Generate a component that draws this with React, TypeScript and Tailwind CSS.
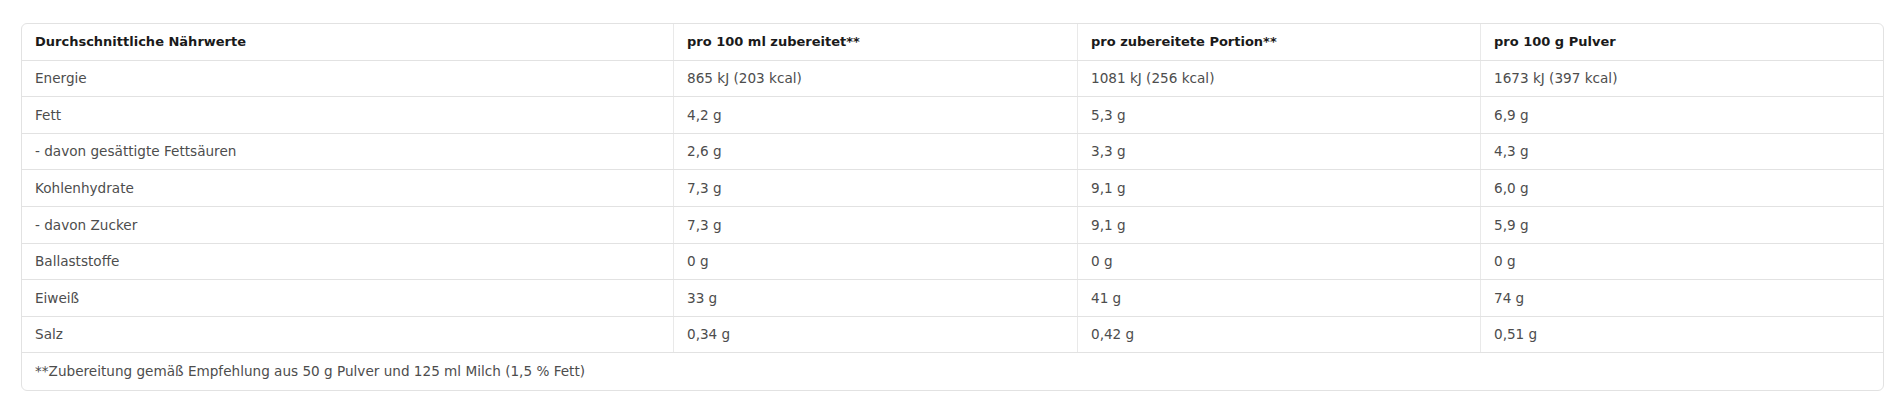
const header = [
  "Durchschnittliche Nährwerte",
  "pro 100 ml zubereitet**",
  "pro zubereitete Portion**",
  "pro 100 g Pulver",
];

const rows: string[][] = [
  ["Energie", "865 kJ (203 kcal)", "1081 kJ (256 kcal)", "1673 kJ (397 kcal)"],
  ["Fett", "4,2 g", "5,3 g", "6,9 g"],
  ["- davon gesättigte Fettsäuren", "2,6 g", "3,3 g", "4,3 g"],
  ["Kohlenhydrate", "7,3 g", "9,1 g", "6,0 g"],
  ["- davon Zucker", "7,3 g", "9,1 g", "5,9 g"],
  ["Ballaststoffe", "0 g", "0 g", "0 g"],
  ["Eiweiß", "33 g", "41 g", "74 g"],
  ["Salz", "0,34 g", "0,42 g", "0,51 g"],
];

const grid = "grid grid-cols-[651px_404px_403px_403px] h-[36.6px] border-b border-[#e2e2e2]";

export default function App() {
  return (
    <div className="min-h-[405px] bg-white pt-[23px] pl-[21px] font-['DejaVu_Sans',sans-serif] text-[13.6px]">
      <div className="w-[1863px] overflow-hidden rounded-[6px] border border-[#e2e2e2] bg-white">
        <div className={grid}>
          {header.map((h, i) => (
            <div
              key={h}
              className={`flex items-center px-[13px] text-[13px] font-bold text-[#1a1a1a] ${i > 0 ? "border-l border-[#e9e9e9]" : ""}`}
            >
              {h}
            </div>
          ))}
        </div>
        {rows.map((row) => (
          <div key={row[0]} className={grid}>
            {row.map((cell, i) => (
              <div
                key={i}
                className={`flex items-center px-[13px] text-[#4d4d4d] ${i > 0 ? "border-l border-[#e9e9e9]" : ""}`}
              >
                {cell}
              </div>
            ))}
          </div>
        ))}
        <div className="flex h-[36.6px] items-center px-[13px] text-[#4d4d4d]">
          **Zubereitung gemäß Empfehlung aus 50 g Pulver und 125 ml Milch (1,5 % Fett)
        </div>
      </div>
    </div>
  );
}
